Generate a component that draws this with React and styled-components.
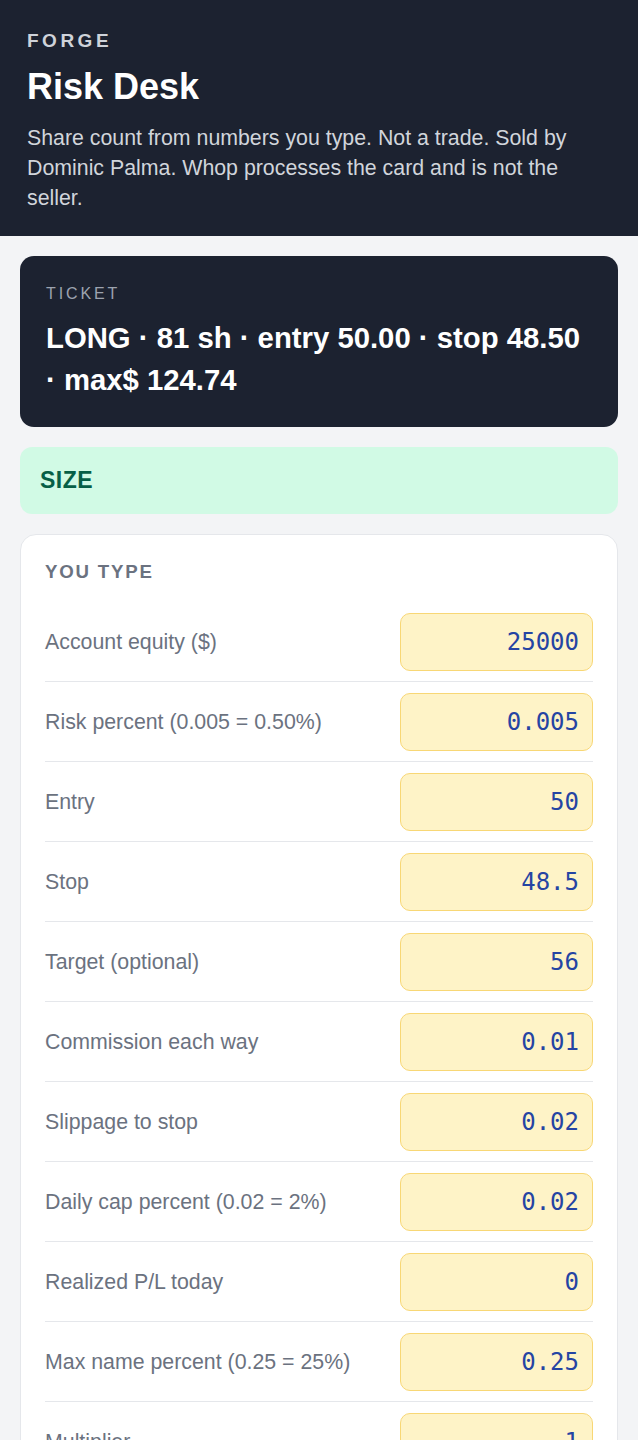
import React, { useState } from "react";
import styled, { createGlobalStyle } from "styled-components";

const Global = createGlobalStyle`
  html, body { margin: 0; padding: 0; background: #f3f4f6; }
  body { font-family: "Liberation Sans", Arial, sans-serif; -webkit-font-smoothing: antialiased; }
  * { box-sizing: border-box; }
`;

const Header = styled.header`
  background: #1c2230;
  padding: 30px 27px 23px;
  color: #fff;
`;

const Brand = styled.div`
  font-size: 19px;
  font-weight: 700;
  letter-spacing: 3.5px;
  color: #cfd3da;
  line-height: 22px;
`;

const Title = styled.h1`
  margin: 13px 0 0;
  font-size: 36px;
  font-weight: 700;
  line-height: 44px;
  color: #fff;
`;

const Lede = styled.p`
  margin: 15px 0 0;
  font-size: 21.33px;
  line-height: 29.8px;
  color: #d1d5db;
`;

const Main = styled.main`
  padding: 20px;
  display: flex;
  flex-direction: column;
  gap: 20px;
`;

const Ticket = styled.section`
  background: #1c2230;
  border-radius: 14px;
  padding: 27px 26px 26px;
`;

const TicketLabel = styled.div`
  font-size: 16px;
  line-height: 22px;
  letter-spacing: 2.9px;
  color: #9ca3af;
`;

const TicketText = styled.div`
  margin-top: 12px;
  font-size: 29.3px;
  line-height: 42px;
  font-weight: 700;
  color: #fff;
`;

const Banner = styled.div`
  background: ${(p) => p.$bg};
  color: ${(p) => p.$fg};
  border-radius: 12px;
  padding: 20px 20px;
  font-size: 23px;
  line-height: 27px;
  letter-spacing: 0.5px;
  font-weight: 700;
`;

const Card = styled.section`
  background: #fff;
  border: 1px solid #e5e7eb;
  border-radius: 16px;
  padding: 26px 24px 24px;
`;

const CardTitle = styled.h2`
  margin: 0 0 19px;
  font-size: 18.67px;
  line-height: 22px;
  font-weight: 700;
  letter-spacing: 1.8px;
  color: #6b7280;
`;

const Row = styled.label`
  display: flex;
  align-items: center;
  justify-content: space-between;
  gap: 16px;
  padding: 11px 0 10px;
  border-bottom: 1px solid #e5e7eb;
  &:last-child { border-bottom: none; }
`;

const FieldLabel = styled.span`
  font-size: 21.33px;
  line-height: 28px;
  color: #6b7280;
`;

const NumInput = styled.input`
  width: 193px;
  height: 58px;
  flex: none;
  background: #fef3c7;
  border: 1.5px solid #f8d775;
  border-radius: 10px;
  padding: 0 13px;
  text-align: right;
  font-family: "DejaVu Sans Mono", monospace;
  font-size: 24px;
  color: #2544a3;
  outline: none;
`;

const initial = [
  ["equity", "Account equity ($)", "25000"],
  ["risk", "Risk percent (0.005 = 0.50%)", "0.005"],
  ["entry", "Entry", "50"],
  ["stop", "Stop", "48.5"],
  ["target", "Target (optional)", "56"],
  ["comm", "Commission each way", "0.01"],
  ["slip", "Slippage to stop", "0.02"],
  ["cap", "Daily cap percent (0.02 = 2%)", "0.02"],
  ["pl", "Realized P/L today", "0"],
  ["maxname", "Max name percent (0.25 = 25%)", "0.25"],
  ["mult", "Multiplier", "1"],
];

export default function App() {
  const [vals, setVals] = useState(() =>
    Object.fromEntries(initial.map(([k, , v]) => [k, v]))
  );
  return (
    <>
      <Global />
      <Header>
        <Brand>FORGE</Brand>
        <Title>Risk Desk</Title>
        <Lede>
          Share count from numbers you type. Not a trade. Sold by Dominic Palma.
          Whop processes the card and is not the seller.
        </Lede>
      </Header>
      <Main>
        <Ticket>
          <TicketLabel>TICKET</TicketLabel>
          <TicketText>
            LONG · 81 sh · entry 50.00 · stop 48.50 · max$ 124.74
          </TicketText>
        </Ticket>
        <Banner $bg="#d1fae5" $fg="#065f46">SIZE</Banner>
        <Card>
          <CardTitle>YOU TYPE</CardTitle>
          {initial.map(([k, label]) => (
            <Row key={k}>
              <FieldLabel>{label}</FieldLabel>
              <NumInput
                inputMode="decimal"
                value={vals[k]}
                onChange={(e) => setVals({ ...vals, [k]: e.target.value })}
              />
            </Row>
          ))}
        </Card>
      </Main>
    </>
  );
}
